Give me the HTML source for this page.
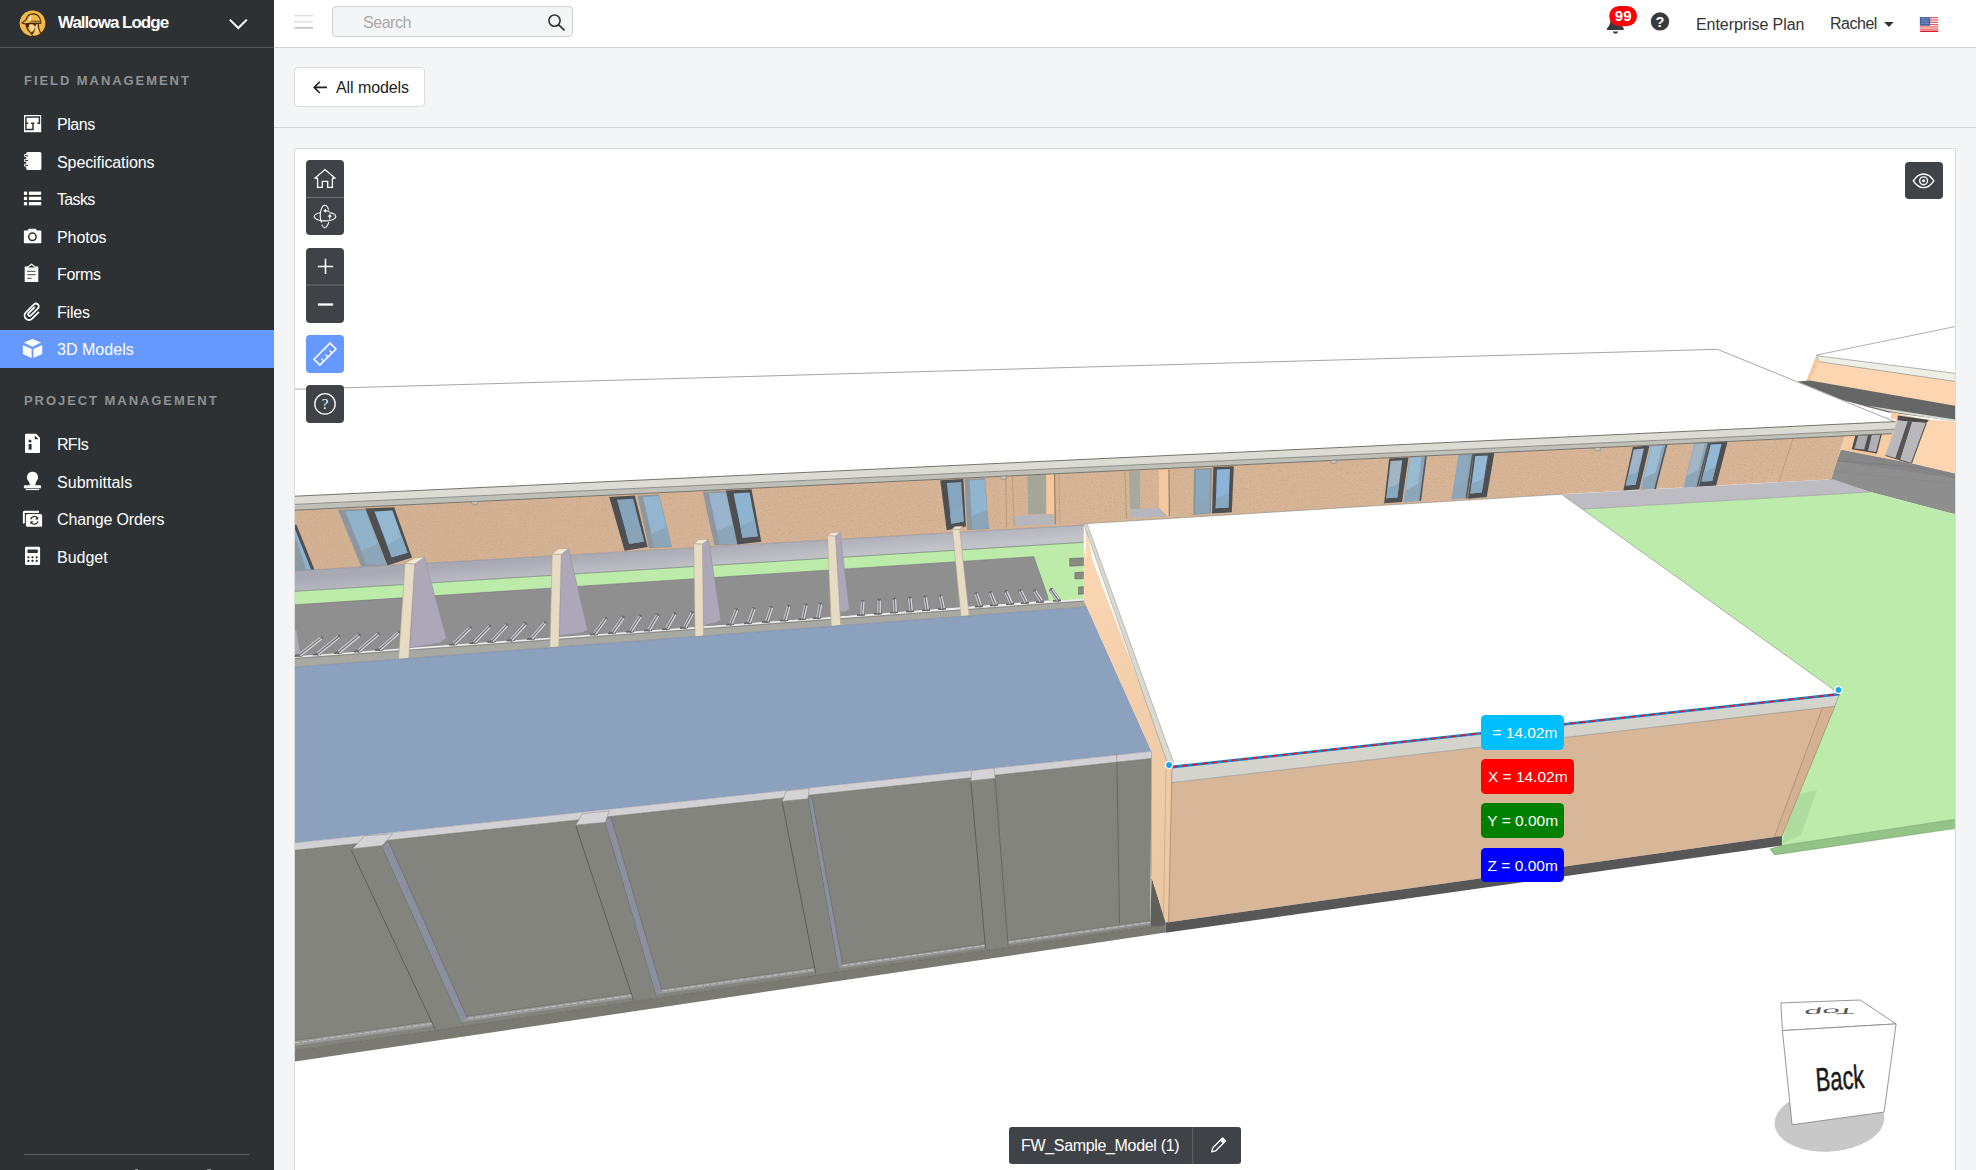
<!DOCTYPE html>
<html>
<head>
<meta charset="utf-8">
<title>3D Models</title>
<style>
*{box-sizing:border-box;margin:0;padding:0}
html,body{width:1976px;height:1170px;overflow:hidden;background:#f4f5f7;font-family:"Liberation Sans",sans-serif;}
body{position:relative}
.abs{position:absolute}
#sidebar{position:absolute;left:0;top:0;width:274px;height:1170px;background:#2d3133;color:#fff}
#sidebar .hdr{position:absolute;left:0;top:0;width:274px;height:48px;border-bottom:1px solid #53575a}
#sidebar .proj{position:absolute;left:58px;top:12px;font-size:17px;font-weight:bold;line-height:22px;letter-spacing:-1.0px;white-space:nowrap}
.sec{position:absolute;left:24px;font-size:13px;font-weight:bold;color:#8e9294;letter-spacing:1.94px;line-height:16px;white-space:nowrap}
.item{position:absolute;left:0;width:274px;height:38px}
.item span{position:absolute;left:57px;top:10px;font-size:16px;line-height:20px;color:#fff;white-space:nowrap;letter-spacing:-0.2px}
.item svg{position:absolute;left:22px;top:8px;width:22px;height:22px}
.item.active{background:#6699ff}
#topbar{position:absolute;left:274px;top:0;width:1702px;height:48px;background:#fff;border-bottom:1px solid #d4d4d5}
#sub{position:absolute;left:274px;top:48px;width:1702px;height:80px;background:#f4f5f7;border-bottom:1px solid #d4d4d5}
#search{position:absolute;left:332px;top:6px;width:241px;height:31px;background:#f4f5f7;border:1px solid #cfcfcf;border-radius:4px}
#search span{position:absolute;left:30px;top:6px;font-size:16px;line-height:20px;color:#a8a8a8;letter-spacing:-0.47px}
#back{position:absolute;left:294px;top:67px;width:131px;height:40px;background:#fff;border:1px solid #dcdcdc;border-radius:4px}
#back span{position:absolute;left:41px;top:10px;font-size:16px;line-height:20px;color:#222;white-space:nowrap;letter-spacing:-0.08px}
.tr{position:absolute;font-size:16px;line-height:20px;color:#333;white-space:nowrap}
#panel{position:absolute;left:294px;top:148px;width:1662px;height:1030px;background:#fff;border:1px solid #dcdcdc}
.tb{position:absolute;left:306px;width:38px;background:#3f4347;border-radius:4px}
.tb svg{position:absolute;left:0}
#lbl{position:absolute;left:1009px;top:1127px;width:232px;height:37px;background:#3f4347;border-radius:3px;color:#fff}
#lbl span{position:absolute;left:12px;top:9px;font-size:16px;line-height:20px;white-space:nowrap;letter-spacing:-0.33px}
#lbl i{position:absolute;left:183px;top:0;width:1px;height:37px;background:#5c6063}
.tag{position:absolute;height:34.5px;border-radius:4.5px;color:#fff;font-size:15.5px;line-height:36.5px;text-align:center;white-space:pre;overflow:hidden}
</style>
</head>
<body>

<!-- ============ VIEWER PANEL ============ -->
<div id="panel"></div>

<!-- SCENE-START -->
<svg class="abs" style="left:295px;top:149px" width="1660" height="1021" viewBox="295 149 1660 1021">
<defs>
<linearGradient id="gwall" gradientUnits="userSpaceOnUse" x1="295" y1="0" x2="1895" y2="0"><stop offset="0" stop-color="#d6b294"/><stop offset="0.5" stop-color="#d9b697"/><stop offset="1" stop-color="#dab798"/></linearGradient>
<linearGradient id="gwalk" gradientUnits="userSpaceOnUse" x1="700" y1="545" x2="702" y2="569"><stop offset="0" stop-color="#a9a9b4"/><stop offset="1" stop-color="#c3c3ca"/></linearGradient>
<linearGradient id="gside" gradientUnits="userSpaceOnUse" x1="0" y1="540" x2="0" y2="920"><stop offset="0" stop-color="#fcd7b3"/><stop offset="0.5" stop-color="#f2cdaa"/><stop offset="1" stop-color="#ebc6a3"/></linearGradient>
<filter id="nz" x="0" y="0" width="100%" height="100%" filterUnits="objectBoundingBox"><feTurbulence type="fractalNoise" baseFrequency="0.75" numOctaves="2" seed="7" result="t"/><feColorMatrix in="t" type="matrix" values="0 0 0 0 0.52  0 0 0 0 0.36  0 0 0 0 0.24  1.6 0 0 0 -0.68" result="c"/><feComposite in="c" in2="SourceGraphic" operator="in"/></filter>
</defs>
<polyline points="1816.3,355.1 1955.5,326.5" fill="none" stroke="#9a9a9a" stroke-width="0.8" />
<polygon points="1816.3,356.1 1806.5,380.8 1797.5,381.5 1868.0,407.8 1955.5,419.1 1955.5,373.9" fill="#fed7b2" />
<polygon points="1819.2,361.7 1955.5,381.5 1955.5,405.9 1809.8,380.5" fill="#fdd6b1" />
<polygon points="1816.3,355.6 1955.5,373.4 1955.5,381.5 1819.2,361.7" fill="#eef0e6" stroke="#6e6e6e" stroke-width="0.5" stroke-linejoin="round" />
<polygon points="1816.3,356.1 1819.2,361.7 1809.8,380.5 1806.5,380.8" fill="#f4c79e" />
<polygon points="1797.5,381.5 1809.8,380.5 1955.5,405.9 1955.5,421.0 1887.7,412.3 1842.3,400.0" fill="#666666" />
<polygon points="1867.7,405.8 1955.5,419.6 1955.5,421.8 1890.0,411.6" fill="#d8d9cf" />
<polygon points="1841.0,450.6 1844.6,436.2 1892.0,433.6 1897.7,414.0 1929.0,419.8 1955.5,422.0 1955.5,474.5" fill="#f3c79e" />
<polygon points="1926.0,419.6 1955.5,422.3 1955.5,473.8 1911.5,463.8" fill="#fdd6b1" />
<polygon points="1897.7,415.4 1929.2,420.0 1926.2,423.1 1897.7,420.4" fill="#4a4a4a" />
<polygon points="1897.7,420.4 1907.7,421.2 1895.4,457.7 1885.4,455.4" fill="#b9b9bd" />
<polygon points="1907.7,421.2 1912.3,421.5 1900.0,460.8 1895.4,457.7" fill="#555557" />
<polygon points="1912.3,421.9 1926.2,423.1 1911.5,463.1 1900.0,460.8" fill="#b9b9bd" />
<polyline points="1926.2,423.1 1911.5,463.1" fill="none" stroke="#555557" stroke-width="1.2" />
<polyline points="1885.4,455.4 1911.5,463.5" fill="none" stroke="#555557" stroke-width="1.0" />
<polygon points="1891.5,412.3 1897.7,413.1 1896.2,419.6 1890.4,418.8" fill="#f8cda4" />
<polygon points="1881.5,436.2 1890.8,435.4 1883.8,457.7 1876.2,456.9" fill="#f8cda4" />
<polygon points="1855.4,434.6 1882.0,433.6 1876.9,453.6 1851.6,449.2" fill="#4e4e50" />
<polygon points="1858.3,435.6 1868.0,435.2 1864.2,449.6 1854.5,448.4" fill="#ababaf" />
<polygon points="1871.8,435.0 1880.4,434.8 1876.0,452.0 1868.0,450.8" fill="#b1b1b5" />
<polygon points="1844.6,436.2 1855.4,434.6 1851.6,449.2 1841.0,450.6" fill="#f6cba2" />
<polygon points="1829.0,480.0 1841.0,450.0 1876.9,456.9 1912.3,463.8 1955.5,473.8 1955.5,514.5 1870.3,492.0" fill="#8e8e8e" />
<polygon points="1841.0,450.0 1876.9,456.9 1912.3,463.8 1955.5,473.8 1955.5,478.5 1838.0,461.0" fill="#868688" />
<polyline points="1837.0,461.0 1917.7,467.0 1955.5,477.0" fill="none" stroke="#777779" stroke-width="0.6" />
<polyline points="1833.0,471.0 1955.5,484.0" fill="none" stroke="#858587" stroke-width="0.5" />
<polyline points="295.0,389.2 1717.5,349.3 1895.3,421.9" fill="none" stroke="#9c9c9c" stroke-width="0.9" />
<polygon points="295.0,510.2 1892.0,433.6 1844.6,436.2 1831.5,479.2 1561.5,494.3 1083.8,525.1 295.0,570.8" fill="url(#gwall)" />
<polygon points="295,510 1892,433.6 1844.6,436.2 1831.5,479.2 1561.5,494.3 1083.8,525.1 295,570.8" fill="#000" filter="url(#nz)"/>
<polyline points="1792.8,438.8 1778.7,483.0" fill="none" stroke="#b58f6c" stroke-width="0.6" />
<polygon points="295.0,524.0 297.0,528.0 316.5,577.5 295.0,578.6" fill="#8eb2cf" />
<polygon points="295.0,540.0 296.5,540.0 309.0,578.0 295.0,578.6" fill="#8c9aa4" />
<polyline points="295.0,525.0 316.0,577.6" fill="none" stroke="#4d4f52" stroke-width="3" />
<polygon points="338.0,509.8 365.4,508.8 386.6,565.2 361.2,566.4" fill="#8e979f" />
<polygon points="345.3,511.3 365.5,510.5 385.7,564.1 366.8,565.0" fill="#90b3cb" />
<polygon points="361.2,551.0 378.0,543.7 385.7,564.1 366.8,565.0" fill="#8ba6b9" />
<polygon points="365.4,508.5 394.2,507.3 412.0,557.6 387.4,565.4" fill="#4d4f52" />
<polygon points="374.4,511.5 392.4,510.5 407.5,552.8 391.7,557.2" fill="#93b8cf" />
<polygon points="387.2,545.3 401.8,536.7 407.5,552.8 391.7,557.2" fill="#8aabc4" />
<polygon points="609.2,496.9 634.9,495.6 647.7,546.9 624.6,550.8" fill="#4d4f52" />
<polygon points="617.0,499.7 633.1,498.8 644.0,541.6 629.2,543.9" fill="#86a5bd" />
<polygon points="626.0,532.4 639.8,525.4 644.0,541.6 629.2,543.9" fill="#8aa3b6" />
<polygon points="637.4,495.6 659.2,494.4 672.0,546.9 649.0,548.2" fill="#8e979f" />
<polygon points="643.0,496.9 659.1,496.0 671.3,545.9 654.3,546.8" fill="#93b5d0" />
<polygon points="651.3,533.9 666.7,526.9 671.3,545.9 654.3,546.8" fill="#8ba6b9" />
<polygon points="702.8,491.8 725.9,491.0 737.4,544.4 714.4,545.6" fill="#8e979f" />
<polygon points="708.7,493.2 725.8,492.6 736.7,543.4 719.7,544.2" fill="#99b4cf" />
<polygon points="716.8,531.0 732.6,524.1 736.7,543.4 719.7,544.2" fill="#8ba6b9" />
<polygon points="725.9,490.5 751.5,489.2 761.3,541.8 737.4,544.4" fill="#4d4f52" />
<polygon points="733.5,493.4 749.5,492.5 757.8,536.3 742.6,537.8" fill="#8fb3d3" />
<polygon points="740.3,526.3 754.7,519.6 757.8,536.3 742.6,537.8" fill="#88a8c0" />
<polygon points="940.3,480.3 963.3,479.0 965.9,526.4 946.7,530.3" fill="#4d4f52" />
<polygon points="946.8,482.9 961.2,482.0 963.7,521.5 951.3,523.8" fill="#86a5c0" />
<polygon points="950.1,513.2 962.7,506.5 963.7,521.5 951.3,523.8" fill="#88a8c0" />
<polygon points="964.6,479.0 985.1,478.2 989.0,529.0 967.2,530.3" fill="#8e979f" />
<polygon points="969.6,480.3 984.8,479.7 988.5,528.0 972.4,529.0" fill="#8fb5d0" />
<polygon points="971.7,516.3 987.1,509.7 988.5,528.0 972.4,529.0" fill="#8ba6b9" />
<polygon points="1027.5,475.1 1045.9,474.4 1045.9,513.8 1028.2,514.6" fill="#a5a699" />
<polygon points="1046.4,474.4 1054.3,474.0 1054.3,514.0 1046.4,514.2" fill="#f3c8a0" />
<polygon points="1014.3,515.9 1051.8,513.9 1055.1,524.5 1014.3,525.8" fill="#b6b6be" />
<polyline points="1005.8,476.4 1006.6,527.6" fill="none" stroke="#b08c68" stroke-width="0.7" />
<polyline points="1012.2,476.2 1014.3,526.2" fill="none" stroke="#b08c68" stroke-width="0.6" />
<polyline points="1054.6,473.9 1055.3,524.4" fill="none" stroke="#8a6c50" stroke-width="0.9" />
<polyline points="1059.0,473.7 1060.0,523.6" fill="none" stroke="#c09870" stroke-width="0.6" />
<polygon points="1128.8,471.2 1140.0,470.7 1140.0,508.9 1130.1,509.4" fill="#a7a99f" />
<polygon points="1159.0,470.0 1168.3,469.6 1168.3,516.4 1159.0,508.2" fill="#f3c8a0" />
<polygon points="1130.1,509.3 1159.7,508.0 1166.3,516.6 1130.1,517.9" fill="#b6b6be" />
<polyline points="1124.9,471.4 1126.6,518.9" fill="none" stroke="#b08c68" stroke-width="0.7" />
<polyline points="1169.0,469.5 1169.4,516.2" fill="none" stroke="#8a6c50" stroke-width="0.8" />
<polygon points="1194.1,468.7 1212.0,467.9 1210.8,513.6 1193.3,514.9" fill="#8a939b" />
<polygon points="1195.9,470.0 1210.2,469.4 1209.1,512.8 1195.1,513.8" fill="#8aa8c0" />
<polygon points="1195.3,502.4 1209.5,496.3 1209.1,512.8 1195.1,513.8" fill="#8ba6b9" />
<polygon points="1213.3,467.0 1233.8,466.2 1231.8,512.3 1212.0,513.6" fill="#4d4f52" />
<polygon points="1216.9,469.6 1230.0,469.1 1228.4,507.5 1215.7,508.2" fill="#8cb4d8" />
<polygon points="1216.0,498.2 1229.0,492.9 1228.4,507.5 1215.7,508.2" fill="#88a8c0" />
<polygon points="1389.2,458.5 1408.5,457.2 1402.0,502.0 1384.1,503.3" fill="#4d4f52" />
<polygon points="1390.6,461.1 1402.3,460.3 1397.3,497.5 1386.3,498.3" fill="#a3b4c2" />
<polygon points="1387.4,488.6 1399.2,483.3 1397.3,497.5 1386.3,498.3" fill="#88a8c0" />
<polygon points="1409.7,457.2 1426.9,455.9 1421.3,500.8 1403.3,502.6" fill="#8fa3b5" />
<polygon points="1410.3,458.1 1421.6,457.2 1416.0,500.4 1404.1,501.6" fill="#98bbd2" />
<polygon points="1405.7,490.3 1418.1,484.0 1416.0,500.4 1404.1,501.6" fill="#8ba6b9" />
<polyline points="1425.9,456.0 1420.2,500.9" fill="none" stroke="#55585c" stroke-width="1.6" />
<polygon points="1458.5,454.6 1473.8,453.8 1467.4,498.2 1451.5,499.5" fill="#8fa3b5" />
<polygon points="1459.0,455.5 1469.1,454.9 1462.8,497.7 1452.3,498.6" fill="#8ea9bf" />
<polygon points="1454.0,487.3 1465.2,481.4 1462.8,497.7 1452.3,498.6" fill="#8ba6b9" />
<polyline points="1472.9,453.8 1466.4,498.3" fill="none" stroke="#55585c" stroke-width="1.6" />
<polygon points="1473.8,453.3 1494.4,452.6 1486.7,496.9 1467.9,498.7" fill="#4d4f52" />
<polygon points="1475.3,456.0 1487.8,455.5 1481.8,492.5 1470.3,493.6" fill="#94b9d6" />
<polygon points="1471.6,483.8 1484.1,478.5 1481.8,492.5 1470.3,493.6" fill="#88a8c0" />
<polygon points="1632.8,446.9 1649.5,445.6 1639.2,489.2 1623.3,490.5" fill="#4d4f52" />
<polygon points="1633.7,449.4 1643.9,448.6 1635.5,484.8 1625.8,485.6" fill="#9fb4c6" />
<polygon points="1627.8,476.2 1638.7,471.0 1635.5,484.8 1625.8,485.6" fill="#88a8c0" />
<polygon points="1650.8,445.6 1667.4,444.9 1655.9,489.2 1640.5,490.0" fill="#8fa3b5" />
<polygon points="1651.3,446.5 1662.2,446.0 1651.5,488.6 1641.3,489.1" fill="#9abcd4" />
<polygon points="1643.9,478.0 1655.6,472.4 1651.5,488.6 1641.3,489.1" fill="#8ba6b9" />
<polyline points="1666.4,444.9 1655.0,489.2" fill="none" stroke="#55585c" stroke-width="1.6" />
<polygon points="1694.4,443.1 1709.7,442.3 1698.2,486.7 1683.3,487.9" fill="#8fa3b5" />
<polygon points="1694.8,444.0 1704.9,443.4 1694.0,486.2 1684.1,487.0" fill="#a2b6c8" />
<polygon points="1686.9,475.8 1698.1,469.9 1694.0,486.2 1684.1,487.0" fill="#8ba6b9" />
<polyline points="1708.8,442.3 1697.3,486.8" fill="none" stroke="#55585c" stroke-width="1.6" />
<polygon points="1709.7,441.8 1727.7,441.0 1716.2,485.4 1698.7,486.7" fill="#4d4f52" />
<polygon points="1710.7,444.4 1721.6,443.9 1712.2,480.9 1701.5,481.6" fill="#92b8d6" />
<polygon points="1703.9,472.0 1715.8,466.8 1712.2,480.9 1701.5,481.6" fill="#88a8c0" />
<polygon points="295.0,504.4 1895.0,429.2 1892.0,433.6 295.0,510.2" fill="#bfc0b8" />
<polygon points="295.0,496.2 1895.3,421.6 1895.0,429.2 295.0,504.4" fill="#dcdcd4" />
<polyline points="295.0,496.2 1895.3,421.6" fill="none" stroke="#66665f" stroke-width="0.9" />
<polyline points="295.0,504.4 1895.0,429.2" fill="none" stroke="#7b7b75" stroke-width="0.8" />
<polyline points="295.0,510.2 1892.0,433.6" fill="none" stroke="#6b6b64" stroke-width="0.9" />
<polygon points="471.0,501.6 478.0,501.3 477.0,504.6 473.0,504.9" fill="#c4c4bc" stroke="#77776f" stroke-width="0.5" stroke-linejoin="round" />
<polygon points="1000.0,476.2 1007.0,475.9 1006.0,479.2 1002.0,479.5" fill="#c4c4bc" stroke="#77776f" stroke-width="0.5" stroke-linejoin="round" />
<polygon points="1330.0,460.4 1337.0,460.1 1336.0,463.4 1332.0,463.7" fill="#c4c4bc" stroke="#77776f" stroke-width="0.5" stroke-linejoin="round" />
<polygon points="1594.0,447.7 1601.0,447.4 1600.0,450.7 1596.0,451.0" fill="#c4c4bc" stroke="#77776f" stroke-width="0.5" stroke-linejoin="round" />
<polygon points="295.0,570.8 1083.8,525.1 1083.8,542.3 295.0,591.3" fill="url(#gwalk)" />
<polyline points="295.0,570.8 1083.8,525.1" fill="none" stroke="#8b8b92" stroke-width="0.6" />
<polygon points="295.0,591.3 1083.8,542.3 1083.8,601.0 1049.0,601.5 1033.8,556.7 295.0,604.8" fill="#bcebaa" />
<polygon points="295.0,604.8 1033.8,556.7 1049.0,600.6 295.0,658.0" fill="#8f8f8f" />
<polyline points="295.0,604.8 1033.8,556.7 1048.0,597.5" fill="none" stroke="#6f6f6f" stroke-width="0.6" />
<polyline points="295.0,591.3 1083.8,542.3" fill="none" stroke="#6f7a70" stroke-width="0.7" />
<polygon points="1069.7,558.5 1083.8,557.8 1083.8,565.5 1069.7,566.2" fill="#8a8a82" stroke="#5c5c58" stroke-width="0.5" stroke-linejoin="round" />
<polygon points="1074.9,572.6 1083.8,572.1 1083.8,578.6 1074.9,579.0" fill="#8a8a82" stroke="#5c5c58" stroke-width="0.5" stroke-linejoin="round" />
<polygon points="1078.5,587.0 1083.8,586.6 1083.8,594.0 1078.5,594.3" fill="#8a8a82" stroke="#5c5c58" stroke-width="0.5" stroke-linejoin="round" />
<polygon points="295.0,657.0 1083.8,599.6 1086.9,606.9 295.0,667.0" fill="#a9a9a3" />
<polyline points="295.0,657.0 1083.8,599.6" fill="none" stroke="#ececec" stroke-width="1.6" />
<polyline points="295.0,658.6 1083.8,601.2" fill="none" stroke="#77777a" stroke-width="0.6" />
<polyline points="295.0,656.0 303.0,655.4" fill="none" stroke="#666668" stroke-width="1.8" />
<polyline points="300.0,654.6 321.0,638.1" fill="none" stroke="#6c6c70" stroke-width="4.6" stroke-linecap="round"/>
<polyline points="300.8,655.6 321.7,639.1" fill="none" stroke="#d2d2d6" stroke-width="1.5" stroke-linecap="round"/>
<polyline points="299.2,653.7 320.2,637.2" fill="none" stroke="#bdbdc3" stroke-width="1.5" stroke-linecap="round"/>
<polyline points="313.0,654.7 321.0,654.1" fill="none" stroke="#666668" stroke-width="1.8" />
<polyline points="318.0,653.3 338.3,637.0" fill="none" stroke="#6c6c70" stroke-width="4.6" stroke-linecap="round"/>
<polyline points="318.8,654.3 339.1,638.0" fill="none" stroke="#d2d2d6" stroke-width="1.5" stroke-linecap="round"/>
<polyline points="317.2,652.4 337.5,636.0" fill="none" stroke="#bdbdc3" stroke-width="1.5" stroke-linecap="round"/>
<polyline points="334.0,653.2 342.0,652.6" fill="none" stroke="#666668" stroke-width="1.8" />
<polyline points="339.0,651.8 358.6,635.6" fill="none" stroke="#6c6c70" stroke-width="4.6" stroke-linecap="round"/>
<polyline points="339.8,652.8 359.4,636.6" fill="none" stroke="#d2d2d6" stroke-width="1.5" stroke-linecap="round"/>
<polyline points="338.2,650.8 357.8,634.7" fill="none" stroke="#bdbdc3" stroke-width="1.5" stroke-linecap="round"/>
<polyline points="354.0,651.7 362.0,651.1" fill="none" stroke="#666668" stroke-width="1.8" />
<polyline points="359.0,650.3 377.8,634.3" fill="none" stroke="#6c6c70" stroke-width="4.6" stroke-linecap="round"/>
<polyline points="359.8,651.3 378.6,635.3" fill="none" stroke="#d2d2d6" stroke-width="1.5" stroke-linecap="round"/>
<polyline points="358.2,649.4 377.0,633.4" fill="none" stroke="#bdbdc3" stroke-width="1.5" stroke-linecap="round"/>
<polyline points="375.0,650.2 383.0,649.6" fill="none" stroke="#666668" stroke-width="1.8" />
<polyline points="380.0,648.8 398.1,633.0" fill="none" stroke="#6c6c70" stroke-width="4.6" stroke-linecap="round"/>
<polyline points="380.8,649.8 398.9,633.9" fill="none" stroke="#d2d2d6" stroke-width="1.5" stroke-linecap="round"/>
<polyline points="379.2,647.9 397.3,632.1" fill="none" stroke="#bdbdc3" stroke-width="1.5" stroke-linecap="round"/>
<polyline points="449.2,644.8 457.2,644.2" fill="none" stroke="#666668" stroke-width="1.8" />
<polyline points="454.2,643.4 469.6,628.2" fill="none" stroke="#6c6c70" stroke-width="4.6" stroke-linecap="round"/>
<polyline points="455.1,644.3 470.5,629.1" fill="none" stroke="#d2d2d6" stroke-width="1.5" stroke-linecap="round"/>
<polyline points="453.3,642.5 468.7,627.3" fill="none" stroke="#bdbdc3" stroke-width="1.5" stroke-linecap="round"/>
<polyline points="469.5,643.3 477.5,642.7" fill="none" stroke="#666668" stroke-width="1.8" />
<polyline points="474.5,641.9 489.2,626.9" fill="none" stroke="#6c6c70" stroke-width="4.6" stroke-linecap="round"/>
<polyline points="475.4,642.8 490.1,627.8" fill="none" stroke="#d2d2d6" stroke-width="1.5" stroke-linecap="round"/>
<polyline points="473.6,641.1 488.3,626.0" fill="none" stroke="#bdbdc3" stroke-width="1.5" stroke-linecap="round"/>
<polyline points="487.4,642.0 495.4,641.4" fill="none" stroke="#666668" stroke-width="1.8" />
<polyline points="492.4,640.6 506.4,625.8" fill="none" stroke="#6c6c70" stroke-width="4.6" stroke-linecap="round"/>
<polyline points="493.3,641.5 507.3,626.6" fill="none" stroke="#d2d2d6" stroke-width="1.5" stroke-linecap="round"/>
<polyline points="491.5,639.8 505.5,624.9" fill="none" stroke="#bdbdc3" stroke-width="1.5" stroke-linecap="round"/>
<polyline points="506.6,640.6 514.6,640.0" fill="none" stroke="#666668" stroke-width="1.8" />
<polyline points="511.6,639.2 524.9,624.5" fill="none" stroke="#6c6c70" stroke-width="4.6" stroke-linecap="round"/>
<polyline points="512.5,640.1 525.8,625.4" fill="none" stroke="#d2d2d6" stroke-width="1.5" stroke-linecap="round"/>
<polyline points="510.7,638.4 524.0,623.7" fill="none" stroke="#bdbdc3" stroke-width="1.5" stroke-linecap="round"/>
<polyline points="526.9,639.2 534.9,638.6" fill="none" stroke="#666668" stroke-width="1.8" />
<polyline points="531.9,637.8 544.5,623.2" fill="none" stroke="#6c6c70" stroke-width="4.6" stroke-linecap="round"/>
<polyline points="532.8,638.6 545.4,624.1" fill="none" stroke="#d2d2d6" stroke-width="1.5" stroke-linecap="round"/>
<polyline points="531.0,636.9 543.5,622.4" fill="none" stroke="#bdbdc3" stroke-width="1.5" stroke-linecap="round"/>
<polyline points="590.0,634.6 598.0,634.0" fill="none" stroke="#666668" stroke-width="1.8" />
<polyline points="595.0,633.2 605.3,619.2" fill="none" stroke="#6c6c70" stroke-width="4.6" stroke-linecap="round"/>
<polyline points="596.0,633.9 606.3,619.9" fill="none" stroke="#d2d2d6" stroke-width="1.5" stroke-linecap="round"/>
<polyline points="594.0,632.4 604.3,618.4" fill="none" stroke="#bdbdc3" stroke-width="1.5" stroke-linecap="round"/>
<polyline points="608.0,633.3 616.0,632.7" fill="none" stroke="#666668" stroke-width="1.8" />
<polyline points="613.0,631.9 622.6,618.0" fill="none" stroke="#6c6c70" stroke-width="4.6" stroke-linecap="round"/>
<polyline points="614.0,632.6 623.7,618.7" fill="none" stroke="#d2d2d6" stroke-width="1.5" stroke-linecap="round"/>
<polyline points="612.0,631.1 621.6,617.3" fill="none" stroke="#bdbdc3" stroke-width="1.5" stroke-linecap="round"/>
<polyline points="626.0,631.9 634.0,631.3" fill="none" stroke="#666668" stroke-width="1.8" />
<polyline points="631.0,630.5 640.0,616.9" fill="none" stroke="#6c6c70" stroke-width="4.6" stroke-linecap="round"/>
<polyline points="632.0,631.2 641.0,617.5" fill="none" stroke="#d2d2d6" stroke-width="1.5" stroke-linecap="round"/>
<polyline points="630.0,629.9 638.9,616.2" fill="none" stroke="#bdbdc3" stroke-width="1.5" stroke-linecap="round"/>
<polyline points="644.0,630.6 652.0,630.0" fill="none" stroke="#666668" stroke-width="1.8" />
<polyline points="649.0,629.2 657.3,615.7" fill="none" stroke="#6c6c70" stroke-width="4.6" stroke-linecap="round"/>
<polyline points="650.1,629.9 658.4,616.4" fill="none" stroke="#d2d2d6" stroke-width="1.5" stroke-linecap="round"/>
<polyline points="647.9,628.6 656.3,615.1" fill="none" stroke="#bdbdc3" stroke-width="1.5" stroke-linecap="round"/>
<polyline points="662.0,629.3 670.0,628.7" fill="none" stroke="#666668" stroke-width="1.8" />
<polyline points="667.0,627.9 674.7,614.5" fill="none" stroke="#6c6c70" stroke-width="4.6" stroke-linecap="round"/>
<polyline points="668.1,628.6 675.8,615.2" fill="none" stroke="#d2d2d6" stroke-width="1.5" stroke-linecap="round"/>
<polyline points="665.9,627.3 673.6,613.9" fill="none" stroke="#bdbdc3" stroke-width="1.5" stroke-linecap="round"/>
<polyline points="680.0,628.0 688.0,627.4" fill="none" stroke="#666668" stroke-width="1.8" />
<polyline points="685.0,626.6 692.0,613.4" fill="none" stroke="#6c6c70" stroke-width="4.6" stroke-linecap="round"/>
<polyline points="686.1,627.2 693.1,614.0" fill="none" stroke="#d2d2d6" stroke-width="1.5" stroke-linecap="round"/>
<polyline points="683.9,626.0 690.9,612.8" fill="none" stroke="#bdbdc3" stroke-width="1.5" stroke-linecap="round"/>
<polyline points="726.0,624.7 734.0,624.1" fill="none" stroke="#666668" stroke-width="1.8" />
<polyline points="731.0,623.3 736.4,610.4" fill="none" stroke="#6c6c70" stroke-width="4.6" stroke-linecap="round"/>
<polyline points="732.2,623.8 737.5,610.9" fill="none" stroke="#d2d2d6" stroke-width="1.5" stroke-linecap="round"/>
<polyline points="729.8,622.8 735.2,610.0" fill="none" stroke="#bdbdc3" stroke-width="1.5" stroke-linecap="round"/>
<polyline points="744.0,623.4 752.0,622.8" fill="none" stroke="#666668" stroke-width="1.8" />
<polyline points="749.0,622.0 753.7,609.3" fill="none" stroke="#6c6c70" stroke-width="4.6" stroke-linecap="round"/>
<polyline points="750.2,622.4 754.9,609.7" fill="none" stroke="#d2d2d6" stroke-width="1.5" stroke-linecap="round"/>
<polyline points="747.8,621.5 752.5,608.8" fill="none" stroke="#bdbdc3" stroke-width="1.5" stroke-linecap="round"/>
<polyline points="762.0,622.1 770.0,621.5" fill="none" stroke="#666668" stroke-width="1.8" />
<polyline points="767.0,620.7 771.1,608.1" fill="none" stroke="#6c6c70" stroke-width="4.6" stroke-linecap="round"/>
<polyline points="768.2,621.0 772.3,608.5" fill="none" stroke="#d2d2d6" stroke-width="1.5" stroke-linecap="round"/>
<polyline points="765.8,620.3 769.9,607.7" fill="none" stroke="#bdbdc3" stroke-width="1.5" stroke-linecap="round"/>
<polyline points="780.0,620.7 788.0,620.1" fill="none" stroke="#666668" stroke-width="1.8" />
<polyline points="785.0,619.3 788.4,607.0" fill="none" stroke="#6c6c70" stroke-width="4.6" stroke-linecap="round"/>
<polyline points="786.2,619.7 789.6,607.3" fill="none" stroke="#d2d2d6" stroke-width="1.5" stroke-linecap="round"/>
<polyline points="783.8,619.0 787.2,606.6" fill="none" stroke="#bdbdc3" stroke-width="1.5" stroke-linecap="round"/>
<polyline points="798.0,619.4 806.0,618.8" fill="none" stroke="#666668" stroke-width="1.8" />
<polyline points="803.0,618.0 805.8,605.8" fill="none" stroke="#6c6c70" stroke-width="4.6" stroke-linecap="round"/>
<polyline points="804.2,618.3 807.0,606.1" fill="none" stroke="#d2d2d6" stroke-width="1.5" stroke-linecap="round"/>
<polyline points="801.8,617.8 804.5,605.5" fill="none" stroke="#bdbdc3" stroke-width="1.5" stroke-linecap="round"/>
<polyline points="813.0,618.3 821.0,617.7" fill="none" stroke="#666668" stroke-width="1.8" />
<polyline points="818.0,616.9 820.2,604.8" fill="none" stroke="#6c6c70" stroke-width="4.6" stroke-linecap="round"/>
<polyline points="819.2,617.2 821.5,605.1" fill="none" stroke="#d2d2d6" stroke-width="1.5" stroke-linecap="round"/>
<polyline points="816.8,616.7 819.0,604.6" fill="none" stroke="#bdbdc3" stroke-width="1.5" stroke-linecap="round"/>
<polyline points="857.0,615.1 865.0,614.5" fill="none" stroke="#666668" stroke-width="1.8" />
<polyline points="862.0,613.7 862.6,602.0" fill="none" stroke="#6c6c70" stroke-width="4.6" stroke-linecap="round"/>
<polyline points="863.2,613.8 863.9,602.1" fill="none" stroke="#d2d2d6" stroke-width="1.5" stroke-linecap="round"/>
<polyline points="860.8,613.7 861.4,601.9" fill="none" stroke="#bdbdc3" stroke-width="1.5" stroke-linecap="round"/>
<polyline points="874.0,613.9 882.0,613.3" fill="none" stroke="#666668" stroke-width="1.8" />
<polyline points="879.0,612.5 879.0,600.9" fill="none" stroke="#6c6c70" stroke-width="4.6" stroke-linecap="round"/>
<polyline points="880.2,612.5 880.3,600.9" fill="none" stroke="#d2d2d6" stroke-width="1.5" stroke-linecap="round"/>
<polyline points="877.8,612.5 877.8,600.9" fill="none" stroke="#bdbdc3" stroke-width="1.5" stroke-linecap="round"/>
<polyline points="890.0,612.7 898.0,612.1" fill="none" stroke="#666668" stroke-width="1.8" />
<polyline points="895.0,611.3 894.4,599.9" fill="none" stroke="#6c6c70" stroke-width="4.6" stroke-linecap="round"/>
<polyline points="896.2,611.3 895.7,599.8" fill="none" stroke="#d2d2d6" stroke-width="1.5" stroke-linecap="round"/>
<polyline points="893.8,611.4 893.2,600.0" fill="none" stroke="#bdbdc3" stroke-width="1.5" stroke-linecap="round"/>
<polyline points="906.0,611.6 914.0,611.0" fill="none" stroke="#666668" stroke-width="1.8" />
<polyline points="911.0,610.2 909.9,598.9" fill="none" stroke="#6c6c70" stroke-width="4.6" stroke-linecap="round"/>
<polyline points="912.2,610.0 911.1,598.7" fill="none" stroke="#d2d2d6" stroke-width="1.5" stroke-linecap="round"/>
<polyline points="909.8,610.3 908.6,599.0" fill="none" stroke="#bdbdc3" stroke-width="1.5" stroke-linecap="round"/>
<polyline points="922.0,610.4 930.0,609.8" fill="none" stroke="#666668" stroke-width="1.8" />
<polyline points="927.0,609.0 925.3,597.8" fill="none" stroke="#6c6c70" stroke-width="4.6" stroke-linecap="round"/>
<polyline points="928.2,608.8 926.5,597.6" fill="none" stroke="#d2d2d6" stroke-width="1.5" stroke-linecap="round"/>
<polyline points="925.8,609.2 924.0,598.0" fill="none" stroke="#bdbdc3" stroke-width="1.5" stroke-linecap="round"/>
<polyline points="938.0,609.2 946.0,608.6" fill="none" stroke="#666668" stroke-width="1.8" />
<polyline points="943.0,607.8 940.7,596.8" fill="none" stroke="#6c6c70" stroke-width="4.6" stroke-linecap="round"/>
<polyline points="944.2,607.6 941.9,596.6" fill="none" stroke="#d2d2d6" stroke-width="1.5" stroke-linecap="round"/>
<polyline points="941.8,608.1 939.5,597.1" fill="none" stroke="#bdbdc3" stroke-width="1.5" stroke-linecap="round"/>
<polyline points="975.0,606.6 983.0,606.0" fill="none" stroke="#666668" stroke-width="1.8" />
<polyline points="980.0,605.2 976.4,594.4" fill="none" stroke="#6c6c70" stroke-width="4.6" stroke-linecap="round"/>
<polyline points="981.2,604.8 977.5,594.0" fill="none" stroke="#d2d2d6" stroke-width="1.5" stroke-linecap="round"/>
<polyline points="978.8,605.6 975.2,594.8" fill="none" stroke="#bdbdc3" stroke-width="1.5" stroke-linecap="round"/>
<polyline points="990.0,605.5 998.0,604.9" fill="none" stroke="#666668" stroke-width="1.8" />
<polyline points="995.0,604.1 990.8,593.5" fill="none" stroke="#6c6c70" stroke-width="4.6" stroke-linecap="round"/>
<polyline points="996.2,603.6 992.0,593.0" fill="none" stroke="#d2d2d6" stroke-width="1.5" stroke-linecap="round"/>
<polyline points="993.8,604.5 989.7,593.9" fill="none" stroke="#bdbdc3" stroke-width="1.5" stroke-linecap="round"/>
<polyline points="1006.0,604.3 1014.0,603.7" fill="none" stroke="#666668" stroke-width="1.8" />
<polyline points="1011.0,602.9 1006.2,592.4" fill="none" stroke="#6c6c70" stroke-width="4.6" stroke-linecap="round"/>
<polyline points="1012.1,602.4 1007.4,591.9" fill="none" stroke="#d2d2d6" stroke-width="1.5" stroke-linecap="round"/>
<polyline points="1009.9,603.4 1005.1,593.0" fill="none" stroke="#bdbdc3" stroke-width="1.5" stroke-linecap="round"/>
<polyline points="1021.0,603.2 1029.0,602.6" fill="none" stroke="#666668" stroke-width="1.8" />
<polyline points="1026.0,601.8 1020.7,591.5" fill="none" stroke="#6c6c70" stroke-width="4.6" stroke-linecap="round"/>
<polyline points="1027.1,601.2 1021.8,590.9" fill="none" stroke="#d2d2d6" stroke-width="1.5" stroke-linecap="round"/>
<polyline points="1024.9,602.4 1019.6,592.0" fill="none" stroke="#bdbdc3" stroke-width="1.5" stroke-linecap="round"/>
<polyline points="1036.0,602.1 1044.0,601.5" fill="none" stroke="#666668" stroke-width="1.8" />
<polyline points="1041.0,600.7 1035.2,591.5" fill="none" stroke="#6c6c70" stroke-width="4.6" stroke-linecap="round"/>
<polyline points="1042.1,600.0 1036.2,590.9" fill="none" stroke="#d2d2d6" stroke-width="1.5" stroke-linecap="round"/>
<polyline points="1039.9,601.4 1034.1,592.2" fill="none" stroke="#bdbdc3" stroke-width="1.5" stroke-linecap="round"/>
<polyline points="1053.0,600.9 1061.0,600.3" fill="none" stroke="#666668" stroke-width="1.8" />
<polyline points="1058.0,599.5 1051.5,590.4" fill="none" stroke="#6c6c70" stroke-width="4.6" stroke-linecap="round"/>
<polyline points="1059.0,598.8 1052.6,589.7" fill="none" stroke="#d2d2d6" stroke-width="1.5" stroke-linecap="round"/>
<polyline points="1057.0,600.2 1050.5,591.2" fill="none" stroke="#bdbdc3" stroke-width="1.5" stroke-linecap="round"/>
<polygon points="295.0,630.0 296.2,630.0 300.2,653.0 295.0,654.0" fill="#ada8b9" />
<polygon points="414.7,563.9 424.3,557.3 446.4,638.1 439.8,642.9 409.9,647.7" fill="#ada8b9" stroke="#8e8a9a" stroke-width="0.5" stroke-linejoin="round" />
<polygon points="405.1,563.3 414.7,563.9 408.7,659.0 398.5,660.2" fill="#e6dcc4" stroke="#a89f8a" stroke-width="0.5" stroke-linejoin="round" />
<polygon points="405.1,563.3 414.7,557.9 424.3,557.3 414.7,563.9" fill="#f0e8d4" stroke="#a89f8a" stroke-width="0.5" stroke-linejoin="round" />
<polygon points="561.2,554.4 568.4,548.4 587.5,629.7 582.2,632.7 559.4,635.7" fill="#ada8b9" stroke="#8e8a9a" stroke-width="0.5" stroke-linejoin="round" />
<polygon points="552.2,553.8 561.2,554.4 558.8,647.7 549.9,648.2" fill="#e6dcc4" stroke="#a89f8a" stroke-width="0.5" stroke-linejoin="round" />
<polygon points="552.2,553.8 558.2,549.0 568.4,548.4 561.2,554.4" fill="#f0e8d4" stroke="#a89f8a" stroke-width="0.5" stroke-linejoin="round" />
<polygon points="702.4,544.0 708.4,539.4 720.8,619.6 716.0,622.6 703.4,625.6" fill="#ada8b9" stroke="#8e8a9a" stroke-width="0.5" stroke-linejoin="round" />
<polygon points="693.8,543.6 702.4,544.0 703.6,636.7 695.1,637.3" fill="#e6dcc4" stroke="#a89f8a" stroke-width="0.5" stroke-linejoin="round" />
<polygon points="693.8,543.6 698.6,539.8 708.4,539.4 702.4,544.0" fill="#f0e8d4" stroke="#a89f8a" stroke-width="0.5" stroke-linejoin="round" />
<polygon points="835.4,535.9 840.0,532.3 849.4,609.0 846.0,611.4 839.9,612.0" fill="#ada8b9" stroke="#8e8a9a" stroke-width="0.5" stroke-linejoin="round" />
<polygon points="827.4,535.6 835.4,535.9 840.8,626.0 831.3,626.6" fill="#e6dcc4" stroke="#a89f8a" stroke-width="0.5" stroke-linejoin="round" />
<polygon points="827.4,535.6 831.2,532.6 840.0,532.3 835.4,535.9" fill="#f0e8d4" stroke="#a89f8a" stroke-width="0.5" stroke-linejoin="round" />
<polygon points="952.3,529.0 959.6,529.2 969.2,616.0 961.0,616.6" fill="#e6dcc4" stroke="#a89f8a" stroke-width="0.5" stroke-linejoin="round" />
<polygon points="952.3,529.0 955.0,526.4 962.6,526.2 959.6,529.2" fill="#f0e8d4" stroke="#a89f8a" stroke-width="0.5" stroke-linejoin="round" />
<polygon points="295.0,667.0 1086.9,606.9 1151.5,751.3 295.0,842.8" fill="#8ba1bd" />
<polyline points="295.0,667.0 1086.9,606.9" fill="none" stroke="#75839a" stroke-width="0.6" />
<polygon points="295.0,850.3 1151.5,758.5 1150.3,926.6 295.0,1050.5" fill="#84847e" />
<polygon points="295.0,1050.5 1150.3,926.6 1165.6,925.2 1165.6,932.6 295.0,1061.5" fill="#7a7a73" />
<polyline points="295.0,1050.5 1150.3,926.6" fill="none" stroke="#62625c" stroke-width="0.6" />
<polygon points="295.0,1040.5 1150.3,920.6 1150.3,924.2 295.0,1045.7" fill="#9a9a98" />
<polyline points="295.0,1042.9 1150.3,922.2" fill="none" stroke="#c4c4c4" stroke-width="0.9" stroke-dasharray="5 2"/>
<polyline points="295.0,1040.5 1150.3,920.6" fill="none" stroke="#66665f" stroke-width="0.5" />
<polygon points="295.0,842.8 1151.5,751.3 1151.5,758.5 295.0,850.3" fill="#d2d2d4" />
<polyline points="295.0,842.8 1151.5,751.3" fill="none" stroke="#8a8f9a" stroke-width="0.5" />
<polyline points="295.0,850.3 1151.5,758.5" fill="none" stroke="#66665f" stroke-width="0.6" />
<polygon points="351.5,850.5 382.3,847.2 461.8,1023.6 434.9,1028.7" fill="#84847e" />
<polyline points="351.5,850.5 434.9,1028.7" fill="none" stroke="#4e4e49" stroke-width="0.7" />
<polyline points="382.3,847.2 461.8,1023.6" fill="none" stroke="#55554f" stroke-width="0.6" />
<polygon points="382.3,847.2 388.7,841.5 466.9,1017.2 461.8,1023.6" fill="#8c8fa0" />
<polyline points="388.7,841.5 466.9,1017.2" fill="none" stroke="#5e5e62" stroke-width="0.5" />
<polygon points="352.8,848.7 364.4,835.9 392.6,833.8 382.3,845.4" fill="#d4d4d6" stroke="#8a8a8a" stroke-width="0.5" stroke-linejoin="round" />
<polygon points="575.9,826.2 605.4,822.3 656.7,996.7 633.6,1000.5" fill="#84847e" />
<polyline points="575.9,826.2 633.6,1000.5" fill="none" stroke="#4e4e49" stroke-width="0.7" />
<polyline points="605.4,822.3 656.7,996.7" fill="none" stroke="#55554f" stroke-width="0.6" />
<polygon points="605.4,822.3 610.5,815.9 661.8,990.3 656.7,996.7" fill="#8c8fa0" />
<polyline points="610.5,815.9 661.8,990.3" fill="none" stroke="#5e5e62" stroke-width="0.5" />
<polygon points="575.9,824.9 582.3,813.8 609.2,810.8 605.4,822.3" fill="#d4d4d6" stroke="#8a8a8a" stroke-width="0.5" stroke-linejoin="round" />
<polygon points="782.3,802.6 808.7,799.5 838.7,969.2 815.6,973.1" fill="#84847e" />
<polyline points="782.3,802.6 815.6,973.1" fill="none" stroke="#4e4e49" stroke-width="0.7" />
<polyline points="808.7,799.5 838.7,969.2" fill="none" stroke="#55554f" stroke-width="0.6" />
<polygon points="808.7,799.5 811.8,796.2 842.6,964.1 838.7,969.2" fill="#8c8fa0" />
<polyline points="811.8,796.2 842.6,964.1" fill="none" stroke="#5e5e62" stroke-width="0.5" />
<polygon points="782.3,801.3 786.2,791.0 809.2,788.5 807.9,798.7" fill="#d4d4d6" stroke="#8a8a8a" stroke-width="0.5" stroke-linejoin="round" />
<polygon points="970.8,781.5 995.1,778.2 1008.0,944.9 985.6,949.2" fill="#84847e" />
<polyline points="970.8,781.5 985.6,949.2" fill="none" stroke="#4e4e49" stroke-width="0.7" />
<polyline points="995.1,778.2 1008.0,944.9" fill="none" stroke="#55554f" stroke-width="0.6" />
<polygon points="970.8,780.8 972.0,770.5 993.8,768.0 995.1,778.2" fill="#d4d4d6" stroke="#8a8a8a" stroke-width="0.5" stroke-linejoin="round" />
<polyline points="1116.9,762.0 1119.5,923.1" fill="none" stroke="#55554f" stroke-width="0.6" />
<polyline points="1116.6,755.1 1116.9,762.0" fill="none" stroke="#8a8a8a" stroke-width="0.6" />
<polygon points="1151.5,876.9 1165.6,920.5 1165.6,925.6 1150.3,926.9" fill="#5f5f5b" />
<polygon points="1085.6,560.0 1085.6,523.8 1092.5,560.0 1170.0,764.0 1173.5,777.0 1171.0,923.1 1165.6,923.0 1151.5,876.9 1151.5,751.3 1086.9,606.9 1083.8,601.0 1083.8,545.0" fill="url(#gside)" />
<polyline points="1151.5,751.3 1151.5,876.9" fill="none" stroke="#9c7c60" stroke-width="0.5" />
<polygon points="1576.0,509.5 1870.3,492.0 1955.5,514.5 1955.5,819.2 1781.9,845.5 1700.0,700.0" fill="#bdebab" />
<polygon points="1781.9,845.5 1955.5,819.2 1955.5,828.5 1774.4,854.9 1770.0,849.0" fill="#93c387" stroke="#6f9a66" stroke-width="0.5" stroke-linejoin="round" />
<polygon points="1792,796 1817,790 1801,835 1782.5,843.5" fill="#a7d59a" opacity="0.65"/>
<polygon points="1555.0,494.7 1833.3,479.2 1870.3,492.0 1576.0,509.5" fill="#bcbcc2" />
<polyline points="1583.0,509.1 1870.3,492.0" fill="none" stroke="#8a8a8a" stroke-width="0.5" />
<polygon points="1171.6,782.7 1834.9,706.3 1781.9,836.1 1168.6,922.2" fill="#d8b799" />
<polygon points="1822.4,708.0 1834.9,706.3 1781.9,836.1 1774.4,836.9" fill="#d4b192" />
<polyline points="1822.4,708.0 1774.4,836.9" fill="none" stroke="#927760" stroke-width="0.5" />
<polyline points="1834.9,706.3 1781.9,836.1" fill="none" stroke="#927760" stroke-width="0.5" />
<polygon points="1165.6,922.6 1168.6,922.2 1781.9,836.1 1781.9,845.5 1165.6,932.8" fill="#575757" />
<polygon points="1172.0,766.6 1839.3,693.8 1834.9,706.3 1171.6,782.7" fill="#d4d4cc" />
<polyline points="1171.6,782.7 1834.9,706.3" fill="none" stroke="#8a8a84" stroke-width="0.6" />
<polyline points="1839.3,693.8 1834.9,706.3" fill="none" stroke="#8a8a84" stroke-width="0.6" />
<polygon points="1083.8,523.8 1561.5,494.3 1839.3,693.8 1172.0,766.6" fill="#ffffff" />
<polyline points="1083.8,523.8 1561.5,494.3 1839.3,693.8" fill="none" stroke="#8a8a8a" stroke-width="0.6" />
<polygon points="1083.8,523.8 1087.0,523.6 1173.4,762.0 1172.0,766.6 1168.4,766.0" fill="#dadad2" stroke="#8a8a84" stroke-width="0.5" stroke-linejoin="round" />
<polyline points="1172.0,766.6 1171.6,782.7 1168.6,922.2" fill="none" stroke="#927760" stroke-width="0.6" />
<polyline points="1166.0,768.0 1163.5,915.0" fill="none" stroke="#c49a78" stroke-width="0.6" />
<polyline points="1172.0,767.0 1839.3,694.2" fill="none" stroke="#1787d8" stroke-width="2.8" />
<polyline points="1172.0,767.0 1839.3,694.2" fill="none" stroke="#e8141c" stroke-width="1.5" stroke-dasharray="6 4"/>
<circle cx="1169.1" cy="765.0" r="3.5" fill="#1aa3ee" stroke="#fff" stroke-width="1.2"/>
<circle cx="1838.5" cy="689.9" r="3.5" fill="#1aa3ee" stroke="#fff" stroke-width="1.2"/>
</svg>
<!-- SCENE-END -->

<!-- toolbar buttons -->
<div class="tb" style="top:160px;height:75px"></div>
<div class="tb" style="top:248px;height:75px"></div>
<div class="tb" style="top:335px;height:38px;background:#6699ff"></div>
<div class="tb" style="top:385px;height:38px"></div>
<div class="tb" style="left:1905px;top:162px;height:37px"></div>



<!-- measurement tags -->
<div class="tag" style="left:1481.2px;top:715.2px;width:83px;background:#00bfff"> = 14.02m</div>
<div class="tag" style="left:1481.2px;top:759.3px;width:93.1px;background:#ff0000">X = 14.02m</div>
<div class="tag" style="left:1481.2px;top:803.4px;width:83px;background:#008000">Y = 0.00m</div>
<div class="tag" style="left:1481.2px;top:847.5px;width:83px;background:#0000ff">Z = 0.00m</div>

<!-- model label -->
<div id="lbl"><span>FW_Sample_Model (1)</span><i></i></div>

<!-- ============ SIDEBAR ============ -->
<div id="sidebar">
  <div class="hdr"></div>
  <div class="proj">Wallowa Lodge</div>
  <div class="sec" style="top:72.6px">FIELD MANAGEMENT</div>
  <div class="item" style="top:105px"><span style="letter-spacing:-0.46px">Plans</span></div>
  <div class="item" style="top:143px"><span style="letter-spacing:-0.09px">Specifications</span></div>
  <div class="item" style="top:180px"><span style="letter-spacing:-0.64px">Tasks</span></div>
  <div class="item" style="top:218px"><span style="letter-spacing:-0.07px">Photos</span></div>
  <div class="item" style="top:255px"><span style="letter-spacing:-0.32px">Forms</span></div>
  <div class="item" style="top:293px"><span style="letter-spacing:-0.22px">Files</span></div>
  <div class="item active" style="top:330px"><span style="letter-spacing:0.03px">3D Models</span></div>
  <div class="sec" style="top:392.6px">PROJECT MANAGEMENT</div>
  <div class="item" style="top:425px"><span style="letter-spacing:-0.7px">RFIs</span></div>
  <div class="item" style="top:463px"><span style="letter-spacing:0.05px">Submittals</span></div>
  <div class="item" style="top:500px"><span style="letter-spacing:-0.15px">Change Orders</span></div>
  <div class="item" style="top:538px"><span style="letter-spacing:0px">Budget</span></div>
  <div class="abs" style="left:24px;top:1154px;width:225px;height:1px;background:#5a5e60"></div>
  <!-- specks --><div class="abs" style="left:135px;top:1169px;width:3px;height:1px;background:#9a9c9d"></div><div class="abs" style="left:207px;top:1169px;width:4px;height:1px;background:#9a9c9d"></div>

<svg class="abs" style="left:0;top:0" width="274" height="1170" viewBox="0 0 274 1170">
  <!-- logo -->
  <g id="logo">
    <circle cx="33.5" cy="24.1" r="13" fill="#4a2c08"/>
    <circle cx="32.5" cy="23.2" r="12.8" fill="#f3b944"/>
    <!-- hat dome -->
    <path d="M22 22.9 L26.2 19.6 C27 16 29.8 13.9 33.2 13.9 C37.6 13.9 40.4 17.4 40.7 21.6 L40.9 23.2 L31 23.4 L27.2 24.6 Z" fill="#f3b944" stroke="#3d2407" stroke-width="1.1" stroke-linejoin="round"/>
    <path d="M28.2 20.6 C28.6 17.6 30 16.2 31.2 15.6 L31 20.8 Z" fill="#fbe2bd"/>
    <path d="M30.8 21.3 H40.6 M31.4 23 H40.8" stroke="#3d2407" stroke-width="0.9" fill="none"/>
    <rect x="31" y="21.7" width="9.6" height="0.9" fill="#e3a52c"/>
    <!-- face shadow -->
    <path d="M25.6 23.4 L30.8 22.6 L31.4 23.6 L28.6 24.2 L29.4 26.6 L27.6 27 L28.8 30 L31 32.6 L33.2 31.2 L34.2 28.4 L35 28.6 L34 32 L32.2 34.6 L33.6 36 L32.6 36.6 L30.6 33.4 L27.6 30.6 L25.8 26.8 Z" fill="#3d2407"/>
    <path d="M29.2 25 L33.6 25.4 L34.4 27.4 L33.2 30.6 L31.6 31.4 Z" fill="#f9dcae"/>
    <path d="M32.4 24.4 L36.8 23.6 L35.4 26 Z" fill="#3d2407"/>
    <!-- hair / neck -->
    <path d="M38.4 23.4 C38.2 27.6 39 31 41.2 33.6" fill="none" stroke="#3d2407" stroke-width="1.1"/>
    <path d="M36.2 27.2 L37.4 31.4 L36.4 34.6" fill="none" stroke="#fbe2bd" stroke-width="1.2"/>
  </g>
  <!-- chevron -->
  <path d="M229.8 19.6 L238.3 28 L246.8 19.6" fill="none" stroke="#fff" stroke-width="2"/>

  <!-- Plans -->
  <rect x="24" y="115" width="17.2" height="17.2" fill="#fff"/>
  <path d="M25.9 117 H39.4 V123.2 H37.4 M34.3 123.2 H31 M33 123.2 V129.6 H25.9 V117 M25.9 123.2 H28.3" fill="none" stroke="#2d3133" stroke-width="1.5"/>
  <!-- Specifications -->
  <rect x="26.2" y="152" width="15.2" height="18" rx="1.6" fill="#fff"/>
  <g fill="none" stroke="#fff" stroke-width="1">
    <path d="M27.5 154.6 H24.6 V156.6 H27.5"/><path d="M27.5 159.4 H24.6 V161.4 H27.5"/><path d="M27.5 164.2 H24.6 V166.2 H27.5"/>
  </g>
  <g stroke="#2d3133" stroke-width="1"><path d="M25.6 155.8 H28.2"/><path d="M25.6 160.6 H28.2"/><path d="M25.6 165.4 H28.2"/></g>
  <!-- Tasks -->
  <g fill="#fff">
    <rect x="23.9" y="191.6" width="3.2" height="3.3"/><rect x="28.9" y="191.6" width="12.3" height="3.3"/>
    <rect x="23.9" y="196.8" width="3.2" height="3.3"/><rect x="28.9" y="196.8" width="12.3" height="3.3"/>
    <rect x="23.9" y="202" width="3.2" height="3.3"/><rect x="28.9" y="202" width="12.3" height="3.3"/>
  </g>
  <!-- Photos -->
  <path d="M24.6 230.4 H27.6 L28.8 228.7 H35.8 L37 230.4 H40.5 Q41.3 230.4 41.3 231.2 V242.4 Q41.3 243.2 40.5 243.2 H24.6 Q23.9 243.2 23.9 242.4 V231.2 Q23.9 230.4 24.6 230.4 Z" fill="#fff"/>
  <circle cx="32.4" cy="236.8" r="3.7" fill="none" stroke="#2d3133" stroke-width="1.5"/>
  <!-- Forms -->
  <path d="M24.7 266.4 H27.4 L31.6 263.5 L35.4 266.4 H38.3 V282 H24.7 Z" fill="#fff"/>
  <path d="M28 267.6 H35 L31.6 265 Z" fill="#2d3133"/>
  <g stroke="#2d3133" stroke-width="0.9"><path d="M27.2 271.3 H35.6"/><path d="M27.2 274.7 H35.8"/><path d="M27.2 278.3 H31.7"/></g>
  <!-- Files paperclip -->
  <g transform="translate(31.7 311.2) rotate(45)">
    <path d="M5.6 -4 V5 A4.4 4.4 0 0 1 -3.2 5 V-6.4 A2.8 2.8 0 0 1 2.4 -6.4 V3.6 A1.6 1.6 0 0 1 -0.8 3.6 V-4.6" fill="none" stroke="#fff" stroke-width="1.8" stroke-linecap="round"/>
  </g>
  <!-- 3D Models cube -->
  <g fill="#fff">
    <path d="M23.8 342.6 L32.4 338.9 L41.1 342.6 L32.4 346.7 Z"/>
    <path d="M22.9 344.9 L31.6 349 V358.1 L22.9 353.9 Z"/>
    <path d="M33.4 349 L42.2 344.9 V353.9 L33.4 358.1 Z"/>
  </g>
  <!-- RFIs -->
  <path d="M26 433.8 H36.2 L40 437.7 V452 Q40 453 39 453 H26 Q25 453 25 452 V434.8 Q25 433.8 26 433.8 Z" fill="#fff"/>
  <path d="M34.8 435.4 V439.3 H38.6 Z" fill="#2d3133"/>
  <circle cx="30" cy="441" r="1.5" fill="#2d3133"/>
  <rect x="28.6" y="444" width="3" height="5.6" fill="#2d3133"/>
  <!-- Submittals -->
  <path d="M32.5 471.7 A5.5 5.5 0 0 1 36.6 480.9 Q35.3 482.6 35.3 485.2 H40.3 Q41.1 485.2 41.1 486.2 V488.2 H23.9 V486.2 Q23.9 485.2 24.7 485.2 H29.9 Q29.9 482.6 28.4 480.9 A5.5 5.5 0 0 1 32.5 471.7 Z" fill="#fff"/>
  <rect x="25.8" y="488.9" width="13.4" height="1.2" fill="#fff"/>
  <!-- Change Orders -->
  <path d="M24.5 522.8 H23.5 V512.4 Q23.5 511.4 24.5 511.4 H38.4 V512.6" fill="none" stroke="#fff" stroke-width="1.2"/>
  <path d="M23.6 511.6 H38.6 V513 H24.8 V522.8 H23.6 Z" fill="#fff"/>
  <rect x="25.9" y="514" width="16.2" height="12.8" rx="1.6" fill="#fff"/>
  <g fill="none" stroke="#2d3133" stroke-width="1.3">
    <path d="M30.6 519.2 A3.9 3.9 0 0 1 37.4 518"/>
    <path d="M38 521.4 A3.9 3.9 0 0 1 31.2 522.6"/>
  </g>
  <path d="M38.2 516.2 V519.4 H35 Z" fill="#2d3133"/>
  <path d="M30.4 524.4 V521.2 H33.6 Z" fill="#2d3133"/>
  <!-- Budget -->
  <rect x="25" y="546.8" width="15.1" height="18.3" rx="1.4" fill="#fff"/>
  <rect x="27.5" y="549.6" width="10.3" height="3.3" rx="0.6" fill="#2d3133"/>
  <g fill="#2d3133">
    <circle cx="28.4" cy="557.3" r="1.15"/><circle cx="32.5" cy="557.3" r="1.15"/><circle cx="36.7" cy="557.3" r="1.15"/>
    <circle cx="28.4" cy="560.9" r="1.15"/><circle cx="32.5" cy="560.9" r="1.15"/><circle cx="36.7" cy="560.9" r="1.15"/>
  </g>
</svg>
</div>

<!-- ============ TOP BAR ============ -->
<div id="topbar"></div>
<div id="sub"></div>
<div id="search"><span>Search</span></div>
<div id="back"><span>All models</span></div>
<div class="tr" style="left:1696px;top:15px;letter-spacing:-0.07px">Enterprise Plan</div>
<div class="tr" style="left:1830px;top:14px;letter-spacing:-0.48px">Rachel</div>

<!-- UI-ICONS-START -->
<svg class="abs" style="left:0;top:0;pointer-events:none" width="1976" height="1170" viewBox="0 0 1976 1170">
  <!-- toolbar dividers -->
  <rect x="306" y="197" width="38" height="1" fill="#6c7073"/>
  <rect x="306" y="284.5" width="38" height="1" fill="#6c7073"/>
  <!-- home -->
  <path d="M314.6 178.4 L325 169.5 L335.4 178.4 H332.4 V187.4 H327.7 V181.3 H322.3 V187.4 H317.6 V178.4 Z" fill="none" stroke="#fff" stroke-width="1.3" stroke-linejoin="miter" stroke-miterlimit="2"/>
  <!-- orbit -->
  <g fill="none" stroke="#fff" stroke-width="1.1">
    <path d="M329.4 212.6 C333 213.2 335.8 214.7 335.8 216.6 C335.8 219 331 220.9 325 220.9 C319 220.9 314.2 219 314.2 216.6 C314.2 214.9 316.6 213.4 320 212.7"/>
    <path d="M321.6 222.6 C320.6 220.4 320.2 218.4 320.2 216 C320.2 210 322.2 205.3 324.8 205.3 C326.4 205.3 327.8 207 328.6 209.6"/>
    <path d="M328.8 222.2 C327.8 225.4 326.4 227.6 324.8 227.6 C323.6 227.6 322.6 226.4 321.8 224.6"/>
    <path d="M324.6 210.8 C326.4 210.8 328 211 329.4 211.4"/>
    <path d="M329.8 219.4 V216.2"/>
  </g>
  <path d="M323.2 210.8 L326 208.8 V212.8 Z" fill="#fff"/>
  <path d="M329.8 214 L332 216.8 H327.6 Z" fill="#fff"/>
  <!-- plus / minus -->
  <path d="M317.8 266.4 H333.2 M325.5 258.7 V274.1" stroke="#fff" stroke-width="1.5" fill="none"/>
  <path d="M317.8 304.5 H333.2" stroke="#fff" stroke-width="2.3" fill="none"/>
  <!-- ruler -->
  <g transform="translate(325 354.1) rotate(-45)" fill="none" stroke="#fff" stroke-width="1.5">
    <rect x="-11.4" y="-4.2" width="22.8" height="8.4"/>
    <path d="M-5.7 4.2 V0.6 M0 4.2 V0.6 M5.7 4.2 V0.6" stroke-width="1.3"/>
  </g>
  <!-- help btn -->
  <circle cx="325" cy="403.9" r="10.2" fill="none" stroke="#fff" stroke-width="1.3"/>
  <text x="325" y="409" text-anchor="middle" font-family="Liberation Serif, serif" font-size="15" fill="#fff">?</text>
  <!-- eye -->
  <path d="M1913.3 180.8 C1916.5 176 1920 174 1923.6 174 C1927.2 174 1930.7 176 1933.9 180.8 C1930.7 185.6 1927.2 187.6 1923.6 187.6 C1920 187.6 1916.5 185.6 1913.3 180.8 Z" fill="none" stroke="#fff" stroke-width="1.4"/>
  <circle cx="1923.6" cy="180.8" r="3.9" fill="none" stroke="#fff" stroke-width="1.4"/>
  <circle cx="1923.6" cy="180.8" r="1.5" fill="#fff"/>
  <!-- pencil -->
  <g transform="translate(1218 1145.6) rotate(45)">
    <path d="M-2.1 -8.6 H2.1 V5.2 L0 8.8 L-2.1 5.2 Z" fill="none" stroke="#fff" stroke-width="1.3" stroke-linejoin="round"/>
    <path d="M-2.1 -5.6 H2.1" stroke="#fff" stroke-width="1.2"/>
    <rect x="-2.1" y="-8.6" width="4.2" height="3" fill="#fff"/>
  </g>
  <!-- hamburger -->
  <path d="M294.2 15.8 H313" stroke="#d6d6d6" stroke-width="1"/>
  <path d="M294.2 21.9 H313" stroke="#cfcfcf" stroke-width="1"/>
  <path d="M294.2 27.8 H313" stroke="#c2c2c2" stroke-width="1.6"/>
  <!-- magnifier -->
  <circle cx="554.5" cy="20.6" r="5.6" fill="none" stroke="#333" stroke-width="1.6"/>
  <path d="M558.6 24.8 L564.6 30.4" stroke="#333" stroke-width="1.8"/>
  <!-- back arrow -->
  <path d="M327 87.4 H314.4 M319.8 81.8 L314.2 87.4 L319.8 93" fill="none" stroke="#222" stroke-width="1.6"/>
  <!-- bell -->
  <path d="M1606.9 30 Q1606.5 27.6 1608.6 26.4 Q1610.6 24 1610.6 19.6 Q1610.6 14.6 1615.4 13.8 V12.8 H1616.8 V13.8 Q1621 14.6 1621 19.6 Q1621 24 1622.4 26.4 Q1624.2 27.6 1623.8 30 Z" fill="#373b3e"/>
  <path d="M1612.8 31.4 H1618.2 Q1617.6 33.8 1615.5 33.8 Q1613.4 33.8 1612.8 31.4 Z" fill="#373b3e"/>
  <rect x="1609.2" y="5.9" width="27.8" height="20.3" rx="10.1" fill="#fb0207"/>
  <text x="1623.2" y="21.2" text-anchor="middle" font-family="Liberation Sans, sans-serif" font-weight="bold" font-size="15" fill="#fff">99</text>
  <!-- help -->
  <circle cx="1660" cy="21.4" r="9.2" fill="#373b3e"/>
  <text x="1660" y="26.6" text-anchor="middle" font-family="Liberation Sans, sans-serif" font-weight="bold" font-size="14.5" fill="#fff">?</text>
  <!-- caret -->
  <path d="M1884.1 22.1 H1893.7 L1888.9 26.9 Z" fill="#333"/>
  <!-- flag -->
  <g>
    <rect x="1919.9" y="17.1" width="18.4" height="14.8" rx="1" fill="#fff"/>
    <g fill="#e8555a">
      <rect x="1919.9" y="17.1" width="18.4" height="1.2"/><rect x="1919.9" y="19.4" width="18.4" height="1.2"/><rect x="1919.9" y="21.7" width="18.4" height="1.2"/><rect x="1919.9" y="24" width="18.4" height="1.2"/><rect x="1919.9" y="26.3" width="18.4" height="1.2"/><rect x="1919.9" y="28.5" width="18.4" height="1.2"/>
    </g>
    <rect x="1919.9" y="30.4" width="18.4" height="1.5" rx="0.7" fill="#d8202a"/>
    <rect x="1919.9" y="17.1" width="10.3" height="8.6" fill="#44609f"/>
    <g fill="#8ea0d0"><rect x="1921" y="18.4" width="8" height="0.8"/><rect x="1921" y="20.6" width="8" height="0.8"/><rect x="1921" y="22.8" width="8" height="0.8"/></g>
  </g>
  <!-- view cube -->
  <ellipse cx="1829.5" cy="1120.7" rx="55" ry="31" fill="#c8c8c8" transform="rotate(-4 1829.5 1120.7)"/>
  <path d="M1780.9 1002.9 L1860.2 1000 L1896.1 1023.9 L1782.4 1030.6 Z" fill="#fff" stroke="#8c8c8c" stroke-width="0.9" stroke-linejoin="round"/>
  <path d="M1782.4 1030.6 L1896.1 1023.9 L1884.1 1112.1 L1792.1 1124.8 Z" fill="#fff" stroke="#8c8c8c" stroke-width="0.9" stroke-linejoin="round"/>
  <text transform="translate(1840.7 1089.5) rotate(-4) scale(0.66 1)" text-anchor="middle" font-family="Liberation Sans, sans-serif" font-size="33" fill="#1a1a1a" stroke="#1a1a1a" stroke-width="0.5">Back</text>
  <text transform="translate(1830.6 1008.6) rotate(178) scale(1.6 0.42) skewX(-4)" text-anchor="middle" font-family="Liberation Sans, sans-serif" font-size="20" fill="#555">Top</text>
</svg>
<!-- UI-ICONS-END -->
</body>
</html>
